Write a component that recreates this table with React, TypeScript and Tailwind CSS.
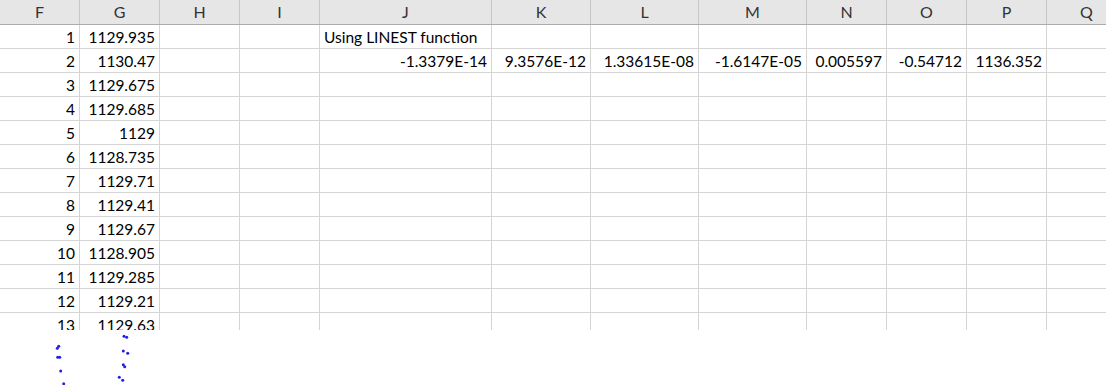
const columns: { name: string; w: number }[] = [
  { name: "F", w: 80 },
  { name: "G", w: 80 },
  { name: "H", w: 80 },
  { name: "I", w: 80 },
  { name: "J", w: 172 },
  { name: "K", w: 99 },
  { name: "L", w: 108 },
  { name: "M", w: 108 },
  { name: "N", w: 80 },
  { name: "O", w: 80 },
  { name: "P", w: 80 },
  { name: "Q", w: 80 },
];

const gValues = [
  "1129.935",
  "1130.47",
  "1129.675",
  "1129.685",
  "1129",
  "1128.735",
  "1129.71",
  "1129.41",
  "1129.67",
  "1128.905",
  "1129.285",
  "1129.21",
  "1129.63",
];

const linest = ["-1.3379E-14", "9.3576E-12", "1.33615E-08", "-1.6147E-05", "0.005597", "-0.54712", "1136.352"];

type Cell = { text: string; align: "left" | "right" };

function rowCells(r: number): (Cell | null)[] {
  const cells: (Cell | null)[] = columns.map(() => null);
  cells[0] = { text: String(r + 1), align: "right" };
  cells[1] = { text: gValues[r], align: "right" };
  if (r === 0) cells[4] = { text: "Using LINEST function", align: "left" };
  if (r === 1) linest.forEach((v, i) => (cells[4 + i] = { text: v, align: "right" }));
  return cells;
}

const dots: [number, number][] = [
  [58.7, 346.3], [57.3, 348.3], [57.7, 357.3], [59.7, 357.3], [60.7, 371], [63.7, 383.7],
  [124, 336.3], [126.7, 337.3], [123.3, 351], [127.7, 353.3], [123.3, 364.7], [124.7, 366.7],
  [119.3, 377.3], [122.7, 380.3],
];

export default function App() {
  return (
    <div
      className="relative w-[1106px] h-[385px] overflow-hidden bg-white text-[15.5px] text-black"
      style={{ fontFamily: "Lato, 'Open Sans', sans-serif" }}
    >
      <div className="h-[330px] overflow-hidden">
        <div className="flex h-[25px] bg-[#e6e6e6] border-b border-[#ababab]">
          {columns.map((c) => (
            <div
              key={c.name}
              className="shrink-0 flex items-center justify-center border-r border-[#c6c6c6] text-[#333] text-[16px]"
              style={{ width: c.w }}
            >
              {c.name}
            </div>
          ))}
        </div>
        {gValues.map((_, r) => (
          <div key={r} className="flex h-[24px]">
            {rowCells(r).map((cell, ci) => (
              <div
                key={ci}
                className={`shrink-0 flex items-end pb-[2px] px-[4px] border-r border-b border-[#d4d4d4] leading-[18px] whitespace-nowrap ${
                  cell?.align === "right" ? "justify-end" : "justify-start"
                }`}
                style={{ width: columns[ci].w }}
              >
                {cell?.text}
              </div>
            ))}
          </div>
        ))}
      </div>
      <svg className="absolute left-0 top-0 pointer-events-none" width="1106" height="385">
        {dots.map(([x, y], i) => (
          <circle key={i} cx={x} cy={y} r="1.5" fill="#1f1fe6" />
        ))}
      </svg>
    </div>
  );
}
